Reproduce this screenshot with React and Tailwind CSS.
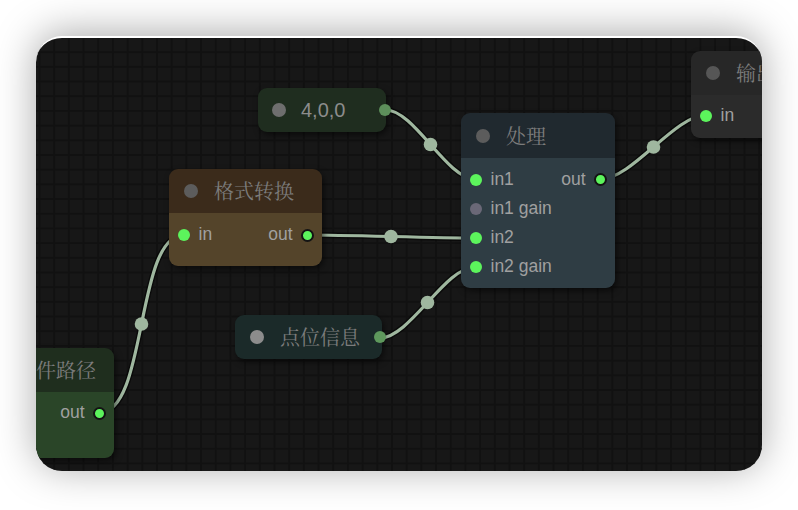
import React from "react";

const CJK = "font-['Noto_Serif_CJK_SC','Noto_Sans_CJK_SC',serif]";
const LAT = "font-['Liberation_Sans',Arial,sans-serif]";

const links = [
  [386, 110, 475, 179],
  [307, 235, 475, 238],
  [380, 338, 475, 267],
  [601, 179, 706, 115],
  [99, 413, 184, 235],
];

function bez(x1, y1, x2, y2) {
  const d = Math.hypot(x2 - x1, y2 - y1) * 0.25;
  const c1 = x1 + d;
  const c2 = x2 - d;
  return {
    d: `M${x1} ${y1} C${c1} ${y1} ${c2} ${y2} ${x2} ${y2}`,
    mx: (x1 + 3 * c1 + 3 * c2 + x2) / 8,
    my: (y1 + y2) / 2,
  };
}

function InDot({ off }) {
  return (
    <span
      className={
        off
          ? "h-3 w-3 shrink-0 rounded-full bg-[#6a6877]"
          : "h-3 w-3 shrink-0 rounded-full bg-[#5cf45c]"
      }
    />
  );
}

function OutDot() {
  return (
    <span className="h-[13px] w-[13px] shrink-0 rounded-full border-2 border-[#141414] bg-[#5cf45c]" />
  );
}

function Header({ bg, title, dot = "bg-[#5c5c5c]" }) {
  return (
    <div className={`flex h-[44px] items-center ${bg}`}>
      <span className={`ml-[15px] h-[14px] w-[14px] shrink-0 rounded-full ${dot}`} />
      <span className={`ml-[16px] whitespace-nowrap text-[20px] leading-none text-[#7c7c7c] ${CJK}`}>
        {title}
      </span>
    </div>
  );
}

function Row({ left, right, off }) {
  return (
    <div className={`flex h-[29px] items-center justify-between px-[8.5px] text-[17.5px] leading-none text-[#a0a0a0] ${LAT}`}>
      <div className="flex items-center gap-[9px]">
        {left && <InDot off={off} />}
        {left && <span>{left}</span>}
      </div>
      <div className="flex items-center gap-[8px]">
        {right && <span>{right}</span>}
        {right && <OutDot />}
      </div>
    </div>
  );
}

const nodeShadow = "shadow-[2px_3px_6px_rgba(0,0,0,0.55)]";

export default function App() {
  return (
    <div className="h-[510px] w-[798px] bg-white px-9 pb-[39px] pt-9">
      <div className="relative h-full w-full overflow-hidden rounded-[26px] border-t-2 border-white bg-[#171717] bg-[linear-gradient(to_right,#111111_1.5px,transparent_1.5px),linear-gradient(to_bottom,#111111_1.5px,transparent_1.5px)] bg-[size:14.7px_14.7px] bg-[position:2.5px_13.2px] shadow-[0_-3px_40px_rgba(0,0,0,0.34)]">
        <svg
          className="absolute inset-0"
          width="726"
          height="433"
          viewBox="36 38 726 433"
        >
          {links.map((l, i) => {
            const b = bez(...l);
            return (
              <g key={i}>
                <path d={b.d} fill="none" stroke="rgba(0,0,0,0.55)" strokeWidth="6" />
                <path d={b.d} fill="none" stroke="#9fb79f" strokeWidth="3.2" />
                <circle cx={b.mx} cy={b.my} r="6.8" fill="#9fb79f" />
              </g>
            );
          })}
        </svg>

        {/* 4,0,0 */}
        <div className={`absolute left-[222px] top-[50px] flex h-[44px] w-[128px] items-center rounded-[9px] bg-[#1f2d1f] ${nodeShadow}`}>
          <span className="ml-[14px] h-[14px] w-[14px] rounded-full bg-[#6e6e6e]" />
          <span className={`ml-[15px] text-[20px] leading-none text-[#8c8c8c] ${LAT}`}>4,0,0</span>
          <span className="absolute right-[-5px] top-1/2 h-3 w-3 -translate-y-1/2 rounded-full bg-[#5d8f5b]" />
        </div>

        {/* 格式转换 */}
        <div className={`absolute left-[133px] top-[131px] w-[153px] overflow-hidden rounded-[9px] ${nodeShadow}`}>
          <Header bg="bg-[#3b2b1b]" title="格式转换" />
          <div className="h-[53px] bg-[#54442a] pt-[7.5px]">
            <Row left="in" right="out" />
          </div>
        </div>

        {/* 处理 */}
        <div className={`absolute left-[425px] top-[75px] w-[154px] overflow-hidden rounded-[9px] ${nodeShadow}`}>
          <Header bg="bg-[#20292f] h-[45px]" title="处理" />
          <div className="bg-[#2f3d44] py-[7px]">
            <Row left="in1" right="out" />
            <Row left="in1 gain" off />
            <Row left="in2" />
            <Row left="in2 gain" />
          </div>
        </div>

        {/* 输出 */}
        <div className={`absolute left-[655px] top-[13px] w-[140px] overflow-hidden rounded-[9px] ${nodeShadow}`}>
          <Header bg="bg-[#272727]" title="输出" dot="bg-[#565656]" />
          <div className="h-[43px] bg-[#2b2b2b] pt-[6px]">
            <Row left="in" />
          </div>
        </div>

        {/* 点位信息 */}
        <div className={`absolute left-[199px] top-[277px] flex h-[44px] w-[147px] items-center rounded-[9px] bg-[#1b2a29] ${nodeShadow}`}>
          <span className="ml-[15px] h-[14px] w-[14px] rounded-full bg-[#8c8c8c]" />
          <span className={`ml-[16px] text-[20px] leading-none text-[#7c7c7c] ${CJK}`}>点位信息</span>
          <span className="absolute right-[-4px] top-1/2 h-3 w-3 -translate-y-1/2 rounded-full bg-[#5e985c]" />
        </div>

        {/* 文件路径 */}
        <div className={`absolute left-[-65px] top-[310px] w-[143px] overflow-hidden rounded-[9px] ${nodeShadow}`}>
          <Header bg="bg-[#1f2e1e]" title="文件路径" />
          <div className="h-[66px] bg-[#2a4528] pt-[6.5px]">
            <Row right="out" />
          </div>
        </div>
      </div>
    </div>
  );
}
